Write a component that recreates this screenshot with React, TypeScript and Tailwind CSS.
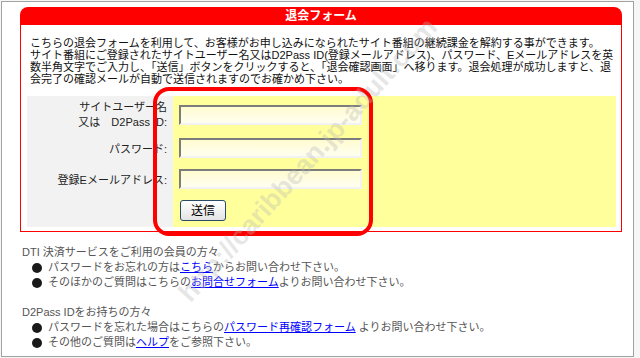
import React from 'react'

const jp = "font-['Liberation_Sans','Noto_Sans_CJK_JP',sans-serif]"

function Field() {
  return (
    <input
      type="text"
      className="w-[183px] h-[20px] border-2 border-t-[#7c7c7c] border-l-[#7c7c7c] border-b-[#f2f2f2] border-r-[#f2f2f2] bg-gradient-to-b from-[#fffbd0] to-[#fffff0] outline-none"
    />
  )
}

function Bullet({ children }: { children: React.ReactNode }) {
  return (
    <div className="flex items-center pl-[10px]">
      <span className="w-[10px] h-[10px] rounded-full bg-[#1a1a1a] mr-[6px] shrink-0" />
      <span>{children}</span>
    </div>
  )
}

const link = 'text-[#0000ff] underline'

export default function App() {
  const paragraph = [
    'こちらの退会フォームを利用して、お客様がお申し込みになられたサイト番組の継続課金を解約する事ができます。',
    'サイト番組にご登録されたサイトユーザー名又はD2Pass ID(登録メールアドレス)、パスワード、Eメールアドレスを英',
    '数半角文字でご入力し、「送信」ボタンをクリックすると、「退会確認画面」へ移ります。退会処理が成功しますと、退',
    '会完了の確認メールが自動で送信されますのでお確かめ下さい。',
  ]

  return (
    <div className={`relative w-[640px] h-[358px] bg-[#f6f6f6] pl-[1px] pt-[1px] overflow-hidden ${jp}`}>
      <div className="w-[633px] h-[356px] border border-[#a2a2a2] bg-white">

        {/* 退会フォーム box */}
        <div className="ml-[18px] mt-[5px] w-[602px]">
          <div className="h-[18px] bg-[#ff0000] rounded-t-[8px] flex items-center justify-center text-white text-[12px] font-bold leading-none">
            退会フォーム
          </div>
          <div className="border-x border-b border-[#ff0000] pt-[12px] pb-[4px]">
            <div className="pl-[9px] text-[11px] leading-[12px] text-[#111]">
              {paragraph.map(line => (
                <div key={line} className="whitespace-nowrap">{line}</div>
              ))}
            </div>

            <div className="mt-[11px] ml-[6px] mr-[5px] grid grid-cols-[146px_1fr] text-[11px] text-[#222]">
              <div className="h-[36px] bg-[#f2f2f2] flex flex-col items-end justify-center pr-[6px] pt-[2px] leading-[15px]">
                <span>サイトユーザー名</span>
                <span>又は　D2Pass ID:</span>
              </div>
              <div className="h-[36px] bg-[#ffff9c] flex items-center pl-[6px] pt-[2px]">
                <Field />
              </div>

              <div className="h-[31px] bg-[#f2f2f2] flex items-center justify-end pr-[6px] pt-[3px]">パスワード:</div>
              <div className="h-[31px] bg-[#ffff9c] flex items-center pl-[6px]">
                <Field />
              </div>

              <div className="h-[31px] bg-[#f2f2f2] flex items-center justify-end pr-[6px] pt-[3px]">登録Eメールアドレス:</div>
              <div className="h-[31px] bg-[#ffff9c] flex items-center pl-[6px]">
                <Field />
              </div>

              <div className="h-[33px] bg-[#f2f2f2]" />
              <div className="h-[33px] bg-[#ffff9c] pl-[7px] pt-[6px]">
                <button
                  type="button"
                  className="w-[46px] h-[21px] rounded-[3px] border border-[#2a4a6a] bg-gradient-to-b from-white to-[#e4e4e4] text-[12px] leading-none text-black"
                >
                  送信
                </button>
              </div>
            </div>
          </div>
        </div>

        {/* help links */}
        <div className="pl-[20px] mt-[13px] text-[11px] leading-[15px] text-[#555]">
          <div>DTI 決済サービスをご利用の会員の方々</div>
          <Bullet>
            パスワードをお忘れの方は<a href="#" className={link}>こちら</a>からお問い合わせ下さい。
          </Bullet>
          <Bullet>
            そのほかのご質問はこちらの<a href="#" className={link}>お問合せフォーム</a>よりお問い合わせ下さい。
          </Bullet>
          <div className="h-[15px]" />
          <div>D2Pass IDをお持ちの方々</div>
          <Bullet>
            パスワードを忘れた場合はこちらの<a href="#" className={link}>パスワード再確認フォーム</a> よりお問い合わせ下さい。
          </Bullet>
          <Bullet>
            その他のご質問は<a href="#" className={link}>ヘルプ</a>をご参照下さい。
          </Bullet>
        </div>
      </div>

      {/* annotation around the form fields */}
      <div className="absolute left-[153px] top-[87px] w-[220px] h-[149px] border-[4px] border-[#ff0000] rounded-[16px] pointer-events-none" />

      {/* watermark */}
      <div className="absolute left-[308px] top-[160px] pointer-events-none">
        <div className="-translate-x-1/2 -translate-y-1/2 -rotate-[48deg] whitespace-nowrap font-['Liberation_Sans',sans-serif] font-bold text-[27px] text-[rgba(185,185,185,0.35)]">
          http://caribbean.jp-adult.com
        </div>
      </div>
    </div>
  )
}
